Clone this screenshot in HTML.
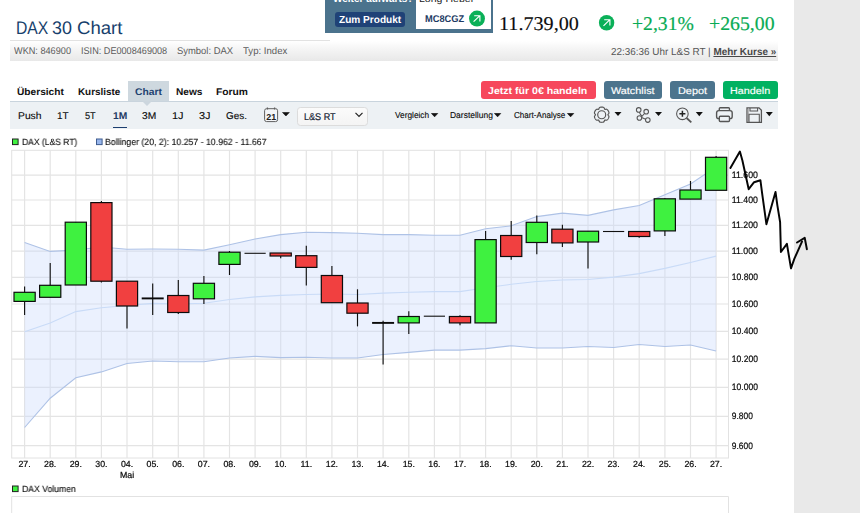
<!DOCTYPE html>
<html lang="de">
<head>
<meta charset="utf-8">
<title>DAX 30 Chart</title>
<style>
html,body{margin:0;padding:0;}
body{width:860px;height:513px;overflow:hidden;background:#fff;position:relative;font-family:"Liberation Sans",Arial,sans-serif;color:#222;}
.abs{position:absolute;white-space:nowrap;}
.t{position:absolute;white-space:nowrap;line-height:1;transform-origin:0 0;text-rendering:geometricPrecision;}
#side{left:794px;top:0;width:66px;height:513px;background:#e9e9e9;}
#title{left:15px;top:15px;font-size:20.5px;color:#173f6c;}
#adbox{left:325.2px;top:0;width:167.5px;height:32.5px;background:#4b738d;}
#adwhite{left:416px;top:0;width:74.6px;height:29.3px;background:#fff;}
#zum{left:335.1px;top:12.1px;width:69.7px;height:15.2px;background:#1f4277;border-radius:3px;}
#infobar{left:10px;top:41px;width:768px;height:20px;background:linear-gradient(#ffffff,#f6f6f6 35%,#e8e8e8);}
#infoline{left:10px;top:40px;width:320px;height:1px;background:#e2e2e2;}
#tabsel{left:128px;top:81px;width:41px;height:20px;background:#ced8df;}
#tabptr{left:142.3px;top:101px;width:0;height:0;border-left:5.3px solid transparent;border-right:5.3px solid transparent;border-top:5.6px solid #ccd6de;}
#toolbar{left:10px;top:101px;width:768px;height:28px;background:#edf1f4;border-top:1px solid #c9d4dd;box-sizing:border-box;}
.btn{position:absolute;top:81px;height:18px;border-radius:3px;}
.nav{font-size:11.5px;color:#111;font-weight:bold;}
.tb{font-size:11px;color:#111;}
.sm{font-size:8.5px;color:#111;}
.info{font-size:9.5px;color:#666;}
.price{font-family:"Liberation Serif",serif;}
</style>
</head>
<body>
<div class="abs" id="side"></div>


<div class="abs" id="adbox"></div>
<div class="abs" id="adwhite"></div>
<div class="abs" id="zum"></div>
<svg class="abs" style="left:466px;top:8px" width="22" height="22" viewBox="466 8 22 22"><circle cx="477" cy="18.55" r="7.95" fill="#0ab058"/><path d="M473.6 21.6L479.6 15.9M474.2 15.7H479.9V21.4" stroke="#fff" stroke-width="1.15" fill="none"/></svg>

<svg class="abs" style="left:596px;top:12px" width="22" height="22" viewBox="596 12 22 22"><circle cx="606.6" cy="22.8" r="7.7" fill="#0ab058"/><path d="M603.5 25.8L609.6 19.9M604.2 19.7H609.9V25.4" stroke="#fff" stroke-width="1.15" fill="none"/></svg>

<div class="abs" id="infobar"></div><div class="abs" id="infoline"></div>

<div class="abs" id="tabsel"></div>

<div class="btn" style="left:481px;width:115px;background:#f6475c;"></div>
<div class="btn" style="left:604px;width:58px;background:#4c748d;"></div>
<div class="btn" style="left:670px;width:45px;background:#4c748d;"></div>
<div class="btn" style="left:723px;width:55px;background:#01b161;"></div>

<div class="abs" id="toolbar"></div>
<div class="abs" id="tabptr"></div>
<div class="abs" style="left:113.2px;top:126.7px;width:13.6px;height:1.4px;background:#1c3e6f;"></div>

<!-- calendar icon -->
<svg class="abs" style="left:255px;top:100px" width="40" height="30" viewBox="255 100 40 30">
<rect x="264.6" y="108.7" width="13" height="12.9" rx="2" fill="#f4f6f8" stroke="#5f5f5f" stroke-width="1"/>
<path d="M267.4 107.4V109.6M274.6 107.4V109.6" stroke="#5f5f5f" stroke-width="1.3" fill="none"/>
<text x="271.2" y="119.9" font-family="Liberation Sans, Arial, sans-serif" font-size="8.9" font-weight="bold" text-anchor="middle" fill="#222">21</text>
<path d="M282.5 112.5H289.3L285.9 116Z" fill="#111" stroke="#111" stroke-width="0.6" stroke-linejoin="round"/>
</svg>

<div class="abs" style="left:297px;top:106.5px;width:71.3px;height:19px;background:linear-gradient(#fbfbfb,#f4f4f4);border:1px solid #dcdcdc;border-radius:3.5px;box-sizing:border-box;"></div>
<svg class="abs" style="left:354px;top:111px" width="10" height="8" viewBox="0 0 10 8"><path d="M1.5 1.8L5 5.3L8.5 1.8" stroke="#222" stroke-width="1.2" fill="none"/></svg>

<svg class="abs" style="left:431.4px;top:112.6px" width="8" height="5" viewBox="0 0 8 5"><path d="M0.5 0.5H6.7L3.6 3.8Z" fill="#111" stroke="#111" stroke-width="0.7" stroke-linejoin="round"/></svg>
<svg class="abs" style="left:494.4px;top:112.6px" width="8" height="5" viewBox="0 0 8 5"><path d="M0.5 0.5H6.7L3.6 3.8Z" fill="#111" stroke="#111" stroke-width="0.7" stroke-linejoin="round"/></svg>
<svg class="abs" style="left:567.1px;top:112.6px" width="8" height="5" viewBox="0 0 8 5"><path d="M0.5 0.5H6.7L3.6 3.8Z" fill="#111" stroke="#111" stroke-width="0.7" stroke-linejoin="round"/></svg>

<!--ICONS--><svg class="abs" style="left:0;top:0" width="860" height="140" viewBox="0 0 860 140" fill="none" stroke="#555" stroke-width="1.05">
<path d="M601.70 107.10L602.03 107.11L602.36 107.13L602.69 107.17L603.02 107.23L603.34 107.31L603.64 107.44L603.92 107.65L604.16 107.94L604.34 108.32L604.48 108.74L604.61 109.11L604.80 109.33L605.09 109.38L605.47 109.32L605.90 109.23L606.32 109.19L606.70 109.25L607.01 109.39L607.28 109.59L607.51 109.82L607.73 110.08L607.93 110.34L608.11 110.62L608.28 110.90L608.44 111.19L608.59 111.49L608.72 111.79L608.83 112.10L608.92 112.42L608.96 112.76L608.92 113.10L608.78 113.45L608.54 113.80L608.25 114.13L608.00 114.43L607.90 114.70L608.00 114.97L608.25 115.27L608.54 115.60L608.78 115.95L608.92 116.30L608.96 116.64L608.92 116.98L608.83 117.30L608.72 117.61L608.59 117.91L608.44 118.21L608.28 118.50L608.11 118.78L607.93 119.06L607.73 119.32L607.51 119.58L607.28 119.81L607.01 120.01L606.70 120.15L606.32 120.21L605.90 120.17L605.47 120.08L605.09 120.02L604.80 120.07L604.61 120.29L604.48 120.66L604.34 121.08L604.16 121.46L603.92 121.75L603.64 121.96L603.34 122.09L603.02 122.17L602.69 122.23L602.36 122.27L602.03 122.29L601.70 122.30L601.37 122.29L601.04 122.27L600.71 122.23L600.38 122.17L600.06 122.09L599.76 121.96L599.48 121.75L599.24 121.46L599.06 121.08L598.92 120.66L598.79 120.29L598.60 120.07L598.31 120.02L597.93 120.08L597.50 120.17L597.08 120.21L596.70 120.15L596.39 120.01L596.12 119.81L595.89 119.58L595.67 119.32L595.47 119.06L595.29 118.78L595.12 118.50L594.96 118.21L594.81 117.91L594.68 117.61L594.57 117.30L594.48 116.98L594.44 116.64L594.48 116.30L594.62 115.95L594.86 115.60L595.15 115.27L595.40 114.97L595.50 114.70L595.40 114.43L595.15 114.13L594.86 113.80L594.62 113.45L594.48 113.10L594.44 112.76L594.48 112.42L594.57 112.10L594.68 111.79L594.81 111.49L594.96 111.19L595.12 110.90L595.29 110.62L595.47 110.34L595.67 110.08L595.89 109.82L596.12 109.59L596.39 109.39L596.70 109.25L597.08 109.19L597.50 109.23L597.93 109.32L598.31 109.38L598.60 109.33L598.79 109.11L598.92 108.74L599.06 108.32L599.24 107.94L599.48 107.65L599.76 107.44L600.06 107.31L600.38 107.23L600.71 107.17L601.04 107.13L601.37 107.11L601.70 107.10Z" stroke-width="1.15"/>
<circle cx="601.7" cy="114.7" r="4.0" stroke-width="1.15"/>
<g fill="#111" stroke="none">
<path d="M614.5 112H621.5L618 116Z"/>
<path d="M655 112H662L658.5 116Z"/>
<path d="M695.8 111.9H702.8L699.3 116.3Z"/>
<path d="M765.8 111.9H772.8L769.3 116.3Z"/>
</g>
<circle cx="638.7" cy="109.9" r="2.3"/>
<circle cx="646.2" cy="111.7" r="2.3"/>
<circle cx="639.4" cy="118" r="2.3"/>
<circle cx="647.8" cy="120.1" r="2.3"/>
<path d="M639.4 112.2C640 114.5 641 115.5 642 116M641.5 116.8L644.5 113.5M641.7 117.6L645.6 119.3"/>
<circle cx="682.4" cy="113.8" r="5.8"/>
<path d="M686.6 118L691.3 122.3" stroke-width="1.8"/>
<path d="M679.4 113.8H685.4M682.4 110.8V116.8" stroke="#222" stroke-width="1.5"/>
<path d="M719.3 110.4V108.7Q719.3 107.7 720.3 107.7H728.5Q729.5 107.7 729.5 108.7V110.4" stroke-width="1.4"/>
<rect x="716.6" y="110.6" width="15.6" height="8" rx="2.2" stroke-width="1.4"/>
<rect x="719.3" y="116.2" width="10.2" height="5.3" rx="1" fill="#edf1f4" stroke-width="1.4"/>
<path d="M747 107.9H759L761.4 110.3V122.4H747Z" stroke-width="1.3"/><path d="M748.3 109V121.5" stroke="#aaa" stroke-width="1"/>
<path d="M750 108V111H757.6V108"/>
<path d="M749 122.4V114.3H759.3V122.4"/>
</svg><!--/ICONS-->

<h1 style="margin:0;font-size:inherit;font-weight:normal"><span class="t" id="title" style="left:15.72px;top:19.00px;font-size:18.2px;color:#173f6c;transform:scaleX(0.8645);">DAX</span> <span class="t" id="title2" style="left:52.30px;top:19.00px;font-size:18.2px;color:#173f6c;transform:scaleX(0.9854);">30</span> <span class="t" id="title3" style="left:76.66px;top:19.00px;font-size:18.2px;color:#173f6c;transform:scaleX(1.0216);">Chart</span></h1>
<div class="t" id="ad1" style="left:332.81px;top:-6.00px;font-size:10.8px;color:#fff;font-weight:bold;transform:scaleX(0.9263);">Weiter aufwärts?</div>
<div class="t" id="ad2" style="left:419.37px;top:-5.00px;font-size:10.3px;color:#222;transform:scaleX(1.0251);">Long Hebel</div>
<div class="t" id="zumt" style="left:338.87px;top:16.01px;font-size:10.3px;color:#fff;font-weight:bold;transform:scaleX(0.9798);">Zum Produkt</div>
<div class="t" id="mc" style="left:425.48px;top:15.00px;font-size:9.75px;color:#1c3a63;font-weight:bold;transform:scaleX(0.9521);">MC8CGZ</div>
<div class="t" id="price" style="left:499.11px;top:15.01px;font-size:19.5px;color:#0c0c0c;-webkit-text-stroke:0.15px #0c0c0c;font-family:'Liberation Serif','Times New Roman',serif;transform:scaleX(1.0332);">11.739,00</div>
<div class="t" id="pct" style="left:632.14px;top:15.01px;font-size:19.5px;color:#09ab54;-webkit-text-stroke:0.2px #09ab54;font-family:'Liberation Serif','Times New Roman',serif;transform:scaleX(1.0074);">+2,31%</div>
<div class="t" id="abs" style="left:709.14px;top:15.01px;font-size:19.5px;color:#09ab54;-webkit-text-stroke:0.2px #09ab54;font-family:'Liberation Serif','Times New Roman',serif;transform:scaleX(1.0140);">+265,00</div>
<div class="t" id="wkn" style="left:14.36px;top:47.01px;font-size:9.8px;color:#5c5c5c;transform:scaleX(0.9342);">WKN: 846900</div>
<div class="t" id="isin" style="left:81.40px;top:47.01px;font-size:9.8px;color:#5c5c5c;transform:scaleX(0.9305);">ISIN: DE0008469008</div>
<div class="t" id="sym" style="left:176.98px;top:47.01px;font-size:9.8px;color:#5c5c5c;transform:scaleX(0.9619);">Symbol: DAX</div>
<div class="t" id="typ" style="left:242.92px;top:47.01px;font-size:9.8px;color:#5c5c5c;transform:scaleX(0.9798);">Typ: Index</div>
<div class="t" id="time" style="left:610.74px;top:48.01px;font-size:10.1px;color:#555;transform:scaleX(0.9813);">22:36:36 Uhr L&amp;S RT | <b style="text-decoration:underline;color:#484848">Mehr Kurse »</b></div>
<div class="t" id="n1" style="left:17.10px;top:88.01px;font-size:9.75px;color:#111;font-weight:bold;transform:scaleX(1.0417);">Übersicht</div>
<div class="t" id="n2" style="left:78.40px;top:88.01px;font-size:9.75px;color:#111;font-weight:bold;transform:scaleX(1.0118);">Kursliste</div>
<div class="t" id="n3" style="left:134.51px;top:88.01px;font-size:9.75px;color:#1d4370;font-weight:bold;transform:scaleX(1.0533);">Chart</div>
<div class="t" id="n4" style="left:175.75px;top:88.01px;font-size:9.75px;color:#111;font-weight:bold;transform:scaleX(1.0391);">News</div>
<div class="t" id="n5" style="left:215.94px;top:88.01px;font-size:9.75px;color:#111;font-weight:bold;transform:scaleX(1.0516);">Forum</div>
<div class="t" id="b1" style="left:488.41px;top:87.01px;font-size:9.8px;color:#fff;font-weight:bold;transform:scaleX(1.0796);">Jetzt für 0€ handeln</div>
<div class="t" id="b2" style="left:610.76px;top:87.01px;font-size:9.8px;color:#fff;-webkit-text-stroke:0.15px #fff;transform:scaleX(1.1063);">Watchlist</div>
<div class="t" id="b3" style="left:677.77px;top:87.01px;font-size:9.8px;color:#fff;-webkit-text-stroke:0.15px #fff;transform:scaleX(1.1126);">Depot</div>
<div class="t" id="b4" style="left:730.37px;top:87.01px;font-size:9.8px;color:#fff;-webkit-text-stroke:0.15px #fff;transform:scaleX(1.1002);">Handeln</div>
<div class="t" id="t1" style="left:17.70px;top:112.00px;font-size:9.9px;color:#0a0a0a;-webkit-text-stroke:0.12px #0a0a0a;transform:scaleX(1.0451);">Push</div>
<div class="t" id="t2" style="left:56.99px;top:112.00px;font-size:9.9px;color:#0a0a0a;-webkit-text-stroke:0.12px #0a0a0a;transform:scaleX(1.0163);">1T</div>
<div class="t" id="t3" style="left:85.33px;top:112.00px;font-size:9.9px;color:#0a0a0a;-webkit-text-stroke:0.12px #0a0a0a;transform:scaleX(0.9315);">5T</div>
<div class="t" id="t4" style="left:112.65px;top:112.00px;font-size:9.9px;color:#1d3a63;font-weight:bold;transform:scaleX(1.0423);">1M</div>
<div class="t" id="t5" style="left:142.20px;top:112.00px;font-size:9.9px;color:#0a0a0a;-webkit-text-stroke:0.12px #0a0a0a;transform:scaleX(1.0381);">3M</div>
<div class="t" id="t6" style="left:172.12px;top:112.00px;font-size:9.9px;color:#0a0a0a;-webkit-text-stroke:0.12px #0a0a0a;transform:scaleX(1.1091);">1J</div>
<div class="t" id="t7" style="left:199.01px;top:112.00px;font-size:9.9px;color:#0a0a0a;-webkit-text-stroke:0.12px #0a0a0a;transform:scaleX(1.1079);">3J</div>
<div class="t" id="t8" style="left:226.09px;top:112.00px;font-size:9.9px;color:#0a0a0a;-webkit-text-stroke:0.12px #0a0a0a;transform:scaleX(1.0066);">Ges.</div>
<div class="t" id="sel" style="left:304.12px;top:113.01px;font-size:9.8px;color:#151d33;-webkit-text-stroke:0.2px #151d33;transform:scaleX(0.9244);">L&amp;S RT</div>
<div class="t" id="v1" style="left:395.07px;top:111.00px;font-size:8.7px;color:#0a0a0a;-webkit-text-stroke:0.12px #0a0a0a;transform:scaleX(0.9538);">Vergleich</div>
<div class="t" id="v2" style="left:450.25px;top:111.00px;font-size:8.7px;color:#0a0a0a;-webkit-text-stroke:0.12px #0a0a0a;transform:scaleX(0.9753);">Darstellung</div>
<div class="t" id="v3" style="left:513.70px;top:111.00px;font-size:8.7px;color:#0a0a0a;-webkit-text-stroke:0.12px #0a0a0a;transform:scaleX(0.9319);">Chart-Analyse</div>
<div class="t" id="l1" style="left:21.68px;top:138.01px;font-size:9.15px;color:#0c0c0c;will-change:transform;-webkit-text-stroke:0.12px #0c0c0c;transform:scaleX(0.9357);">DAX (L&amp;S RT)</div>
<div class="t" id="l2" style="left:105.27px;top:138.01px;font-size:9.15px;color:#0c0c0c;will-change:transform;-webkit-text-stroke:0.12px #0c0c0c;transform:scaleX(0.9571);">Bollinger (20, 2): 10.257 - 10.962 - 11.667</div>
<div class="t" id="l3" style="left:21.92px;top:485.01px;font-size:9.15px;color:#0c0c0c;will-change:transform;-webkit-text-stroke:0.12px #0c0c0c;transform:scaleX(0.9475);">DAX Volumen</div>
<svg id="chart" width="860" height="513" viewBox="0 0 860 513" style="position:absolute;left:0;top:0">
<rect x="11.7" y="150.3" width="716.8" height="307.7" fill="#fff" stroke="#e2e2e2" stroke-width="1"/>
<path d="M24.6 150.3V458.0M50.2 150.3V458.0M75.8 150.3V458.0M101.4 150.3V458.0M127.0 150.3V458.0M152.7 150.3V458.0M178.3 150.3V458.0M203.9 150.3V458.0M229.5 150.3V458.0M255.1 150.3V458.0M280.7 150.3V458.0M306.3 150.3V458.0M331.9 150.3V458.0M357.5 150.3V458.0M383.1 150.3V458.0M408.8 150.3V458.0M434.4 150.3V458.0M460.0 150.3V458.0M485.6 150.3V458.0M511.2 150.3V458.0M536.8 150.3V458.0M562.4 150.3V458.0M588.0 150.3V458.0M613.6 150.3V458.0M639.2 150.3V458.0M664.9 150.3V458.0M690.5 150.3V458.0M716.1 150.3V458.0M11.7 175.1H728.5M11.7 200.0H728.5M11.7 225.3H728.5M11.7 251.1H728.5M11.7 277.3H728.5M11.7 304.0H728.5M11.7 331.3H728.5M11.7 359.1H728.5M11.7 387.4H728.5M11.7 416.3H728.5M11.7 445.7H728.5" stroke="#e4e4e4" stroke-width="1.2" fill="none"/>
<polygon points="24.6,242.6 50.2,251.4 75.8,250.0 101.4,247.0 127.0,249.3 152.7,249.0 178.3,249.2 203.9,250.1 229.5,244.8 255.1,239.0 280.7,234.6 306.3,232.3 331.9,232.6 357.5,233.2 383.1,234.6 408.8,234.6 434.4,235.2 460.0,235.2 485.6,228.8 511.2,225.8 536.8,216.6 562.4,213.1 588.0,215.4 613.6,209.9 639.2,205.5 664.9,194.7 690.5,183.9 716.1,166.9 716.1,351.0 690.5,345.0 664.9,346.5 639.2,344.5 613.6,347.5 588.0,346.5 562.4,348.0 536.8,348.0 511.2,345.7 485.6,348.6 460.0,350.1 434.4,350.1 408.8,352.4 383.1,354.5 357.5,358.0 331.9,358.0 306.3,357.2 280.7,357.6 255.1,356.4 229.5,358.0 203.9,361.8 178.3,361.8 152.7,361.0 127.0,363.5 101.4,371.9 75.8,377.7 50.2,398.2 24.6,427.5" fill="#c8d9fb" fill-opacity="0.36"/>
<polyline points="24.6,242.6 50.2,251.4 75.8,250.0 101.4,247.0 127.0,249.3 152.7,249.0 178.3,249.2 203.9,250.1 229.5,244.8 255.1,239.0 280.7,234.6 306.3,232.3 331.9,232.6 357.5,233.2 383.1,234.6 408.8,234.6 434.4,235.2 460.0,235.2 485.6,228.8 511.2,225.8 536.8,216.6 562.4,213.1 588.0,215.4 613.6,209.9 639.2,205.5 664.9,194.7 690.5,183.9 716.1,166.9" fill="none" stroke="#aec2e6" stroke-width="1.1"/>
<polyline points="24.6,427.5 50.2,398.2 75.8,377.7 101.4,371.9 127.0,363.5 152.7,361.0 178.3,361.8 203.9,361.8 229.5,358.0 255.1,356.4 280.7,357.6 306.3,357.2 331.9,358.0 357.5,358.0 383.1,354.5 408.8,352.4 434.4,350.1 460.0,350.1 485.6,348.6 511.2,345.7 536.8,348.0 562.4,348.0 588.0,346.5 613.6,347.5 639.2,344.5 664.9,346.5 690.5,345.0 716.1,351.0" fill="none" stroke="#aec2e6" stroke-width="1.1"/>
<polyline points="24.6,331.8 50.2,323.0 75.8,311.6 101.4,307.8 127.0,305.5 152.7,303.4 178.3,304.0 203.9,303.3 229.5,299.5 255.1,296.9 280.7,295.4 306.3,294.5 331.9,294.0 357.5,294.5 383.1,293.1 408.8,292.2 434.4,291.6 460.0,291.6 485.6,287.8 511.2,284.3 536.8,281.5 562.4,280.0 588.0,279.5 613.6,277.1 639.2,273.6 664.9,268.4 690.5,262.5 716.1,256.1" fill="none" stroke="#c9dbf7" stroke-width="1.1"/>
<line x1="24.6" y1="286.5" x2="24.6" y2="315.1" stroke="#111" stroke-width="1.15"/>
<rect x="14.0" y="292.3" width="21.2" height="9.1" fill="#3ff140" stroke="#0c0c0c" stroke-width="1.2"/>
<line x1="50.2" y1="263.1" x2="50.2" y2="297.3" stroke="#111" stroke-width="1.15"/>
<rect x="39.6" y="285.3" width="21.2" height="12.0" fill="#3ff140" stroke="#0c0c0c" stroke-width="1.2"/>
<line x1="75.8" y1="222.2" x2="75.8" y2="285.0" stroke="#111" stroke-width="1.15"/>
<rect x="65.2" y="222.2" width="21.2" height="62.8" fill="#3ff140" stroke="#0c0c0c" stroke-width="1.2"/>
<line x1="101.4" y1="201.1" x2="101.4" y2="282.4" stroke="#111" stroke-width="1.15"/>
<rect x="90.8" y="202.6" width="21.2" height="78.6" fill="#f14040" stroke="#0c0c0c" stroke-width="1.2"/>
<line x1="127.0" y1="281.2" x2="127.0" y2="328.6" stroke="#111" stroke-width="1.15"/>
<rect x="116.4" y="281.2" width="21.2" height="24.8" fill="#f14040" stroke="#0c0c0c" stroke-width="1.2"/>
<line x1="152.7" y1="283.5" x2="152.7" y2="315.1" stroke="#111" stroke-width="1.15"/>
<line x1="141.7" y1="298.4" x2="163.7" y2="298.4" stroke="#0a0a0a" stroke-width="1.9"/>
<line x1="178.3" y1="280.0" x2="178.3" y2="314.0" stroke="#111" stroke-width="1.15"/>
<rect x="167.7" y="295.5" width="21.2" height="17.0" fill="#f14040" stroke="#0c0c0c" stroke-width="1.2"/>
<line x1="203.9" y1="276.1" x2="203.9" y2="303.9" stroke="#111" stroke-width="1.15"/>
<rect x="193.3" y="283.3" width="21.2" height="15.5" fill="#3ff140" stroke="#0c0c0c" stroke-width="1.2"/>
<line x1="229.5" y1="251.0" x2="229.5" y2="275.0" stroke="#111" stroke-width="1.15"/>
<rect x="218.9" y="252.2" width="21.2" height="12.2" fill="#3ff140" stroke="#0c0c0c" stroke-width="1.2"/>
<line x1="244.5" y1="253.3" x2="265.7" y2="253.3" stroke="#111" stroke-width="1.1"/>
<line x1="280.7" y1="253.0" x2="280.7" y2="258.3" stroke="#111" stroke-width="1.15"/>
<rect x="270.1" y="253.0" width="21.2" height="3.0" fill="#f14040" stroke="#0c0c0c" stroke-width="1.2"/>
<line x1="306.3" y1="245.7" x2="306.3" y2="285.5" stroke="#111" stroke-width="1.15"/>
<rect x="295.7" y="255.7" width="21.2" height="11.7" fill="#f14040" stroke="#0c0c0c" stroke-width="1.2"/>
<line x1="331.9" y1="265.9" x2="331.9" y2="302.7" stroke="#111" stroke-width="1.15"/>
<rect x="321.3" y="275.5" width="21.2" height="27.2" fill="#f14040" stroke="#0c0c0c" stroke-width="1.2"/>
<line x1="357.5" y1="289.3" x2="357.5" y2="326.4" stroke="#111" stroke-width="1.15"/>
<rect x="346.9" y="303.0" width="21.2" height="10.2" fill="#f14040" stroke="#0c0c0c" stroke-width="1.2"/>
<line x1="383.1" y1="320.8" x2="383.1" y2="364.4" stroke="#111" stroke-width="1.15"/>
<line x1="372.1" y1="322.9" x2="394.1" y2="322.9" stroke="#0a0a0a" stroke-width="1.9"/>
<line x1="408.8" y1="311.2" x2="408.8" y2="334.0" stroke="#111" stroke-width="1.15"/>
<rect x="398.1" y="316.5" width="21.2" height="6.4" fill="#3ff140" stroke="#0c0c0c" stroke-width="1.2"/>
<line x1="423.8" y1="316.2" x2="445.0" y2="316.2" stroke="#111" stroke-width="1.1"/>
<line x1="460.0" y1="315.3" x2="460.0" y2="325.2" stroke="#111" stroke-width="1.15"/>
<rect x="449.4" y="316.5" width="21.2" height="6.4" fill="#f14040" stroke="#0c0c0c" stroke-width="1.2"/>
<line x1="485.6" y1="231.1" x2="485.6" y2="322.9" stroke="#111" stroke-width="1.15"/>
<rect x="475.0" y="239.6" width="21.2" height="83.3" fill="#3ff140" stroke="#0c0c0c" stroke-width="1.2"/>
<line x1="511.2" y1="220.9" x2="511.2" y2="259.8" stroke="#111" stroke-width="1.15"/>
<rect x="500.6" y="235.5" width="21.2" height="21.0" fill="#f14040" stroke="#0c0c0c" stroke-width="1.2"/>
<line x1="536.8" y1="215.5" x2="536.8" y2="254.2" stroke="#111" stroke-width="1.15"/>
<rect x="526.2" y="222.3" width="21.2" height="20.2" fill="#3ff140" stroke="#0c0c0c" stroke-width="1.2"/>
<line x1="562.4" y1="224.8" x2="562.4" y2="247.0" stroke="#111" stroke-width="1.15"/>
<rect x="551.8" y="229.2" width="21.2" height="13.7" fill="#f14040" stroke="#0c0c0c" stroke-width="1.2"/>
<line x1="588.0" y1="231.2" x2="588.0" y2="268.6" stroke="#111" stroke-width="1.15"/>
<rect x="577.4" y="231.2" width="21.2" height="10.8" fill="#3ff140" stroke="#0c0c0c" stroke-width="1.2"/>
<line x1="603.0" y1="231.5" x2="624.2" y2="231.5" stroke="#111" stroke-width="1.1"/>
<line x1="639.2" y1="231.5" x2="639.2" y2="237.7" stroke="#111" stroke-width="1.15"/>
<rect x="628.6" y="231.5" width="21.2" height="5.0" fill="#f14040" stroke="#0c0c0c" stroke-width="1.2"/>
<line x1="664.9" y1="197.9" x2="664.9" y2="235.9" stroke="#111" stroke-width="1.15"/>
<rect x="654.2" y="198.8" width="21.2" height="32.1" fill="#3ff140" stroke="#0c0c0c" stroke-width="1.2"/>
<line x1="690.5" y1="181.0" x2="690.5" y2="199.1" stroke="#111" stroke-width="1.15"/>
<rect x="679.9" y="190.0" width="21.2" height="9.1" fill="#3ff140" stroke="#0c0c0c" stroke-width="1.2"/>
<line x1="716.1" y1="156.1" x2="716.1" y2="190.3" stroke="#111" stroke-width="1.15"/>
<rect x="705.5" y="157.3" width="21.2" height="33.0" fill="#3ff140" stroke="#0c0c0c" stroke-width="1.2"/>
<g font-family="Liberation Sans, Arial, sans-serif" font-size="8.8" fill="#0c0c0c" stroke="#0c0c0c" stroke-width="0.22" text-rendering="geometricPrecision">
<text x="731.8" y="178.1" font-size="9.3" textLength="26.1" lengthAdjust="spacingAndGlyphs">11.600</text>
<text x="731.8" y="203.0" font-size="9.3" textLength="26.1" lengthAdjust="spacingAndGlyphs">11.400</text>
<text x="731.8" y="228.3" font-size="9.3" textLength="26.1" lengthAdjust="spacingAndGlyphs">11.200</text>
<text x="731.8" y="254.1" font-size="9.3" textLength="26.1" lengthAdjust="spacingAndGlyphs">11.000</text>
<text x="731.8" y="280.3" font-size="9.3" textLength="26.1" lengthAdjust="spacingAndGlyphs">10.800</text>
<text x="731.8" y="307.0" font-size="9.3" textLength="26.1" lengthAdjust="spacingAndGlyphs">10.600</text>
<text x="731.8" y="334.3" font-size="9.3" textLength="26.1" lengthAdjust="spacingAndGlyphs">10.400</text>
<text x="731.8" y="362.1" font-size="9.3" textLength="26.1" lengthAdjust="spacingAndGlyphs">10.200</text>
<text x="731.8" y="390.4" font-size="9.3" textLength="26.1" lengthAdjust="spacingAndGlyphs">10.000</text>
<text x="731.8" y="419.3" font-size="9.3" textLength="21.0" lengthAdjust="spacingAndGlyphs">9.800</text>
<text x="731.8" y="448.7" font-size="9.3" textLength="21.0" lengthAdjust="spacingAndGlyphs">9.600</text>
<text x="24.6" y="467.0" text-anchor="middle">27.</text>
<text x="50.2" y="467.0" text-anchor="middle">28.</text>
<text x="75.8" y="467.0" text-anchor="middle">29.</text>
<text x="101.4" y="467.0" text-anchor="middle">30.</text>
<text x="127.0" y="467.0" text-anchor="middle">04.</text>
<text x="152.7" y="467.0" text-anchor="middle">05.</text>
<text x="178.3" y="467.0" text-anchor="middle">06.</text>
<text x="203.9" y="467.0" text-anchor="middle">07.</text>
<text x="229.5" y="467.0" text-anchor="middle">08.</text>
<text x="255.1" y="467.0" text-anchor="middle">09.</text>
<text x="280.7" y="467.0" text-anchor="middle">10.</text>
<text x="306.3" y="467.0" text-anchor="middle">11.</text>
<text x="331.9" y="467.0" text-anchor="middle">12.</text>
<text x="357.5" y="467.0" text-anchor="middle">13.</text>
<text x="383.1" y="467.0" text-anchor="middle">14.</text>
<text x="408.8" y="467.0" text-anchor="middle">15.</text>
<text x="434.4" y="467.0" text-anchor="middle">16.</text>
<text x="460.0" y="467.0" text-anchor="middle">17.</text>
<text x="485.6" y="467.0" text-anchor="middle">18.</text>
<text x="511.2" y="467.0" text-anchor="middle">19.</text>
<text x="536.8" y="467.0" text-anchor="middle">20.</text>
<text x="562.4" y="467.0" text-anchor="middle">21.</text>
<text x="588.0" y="467.0" text-anchor="middle">22.</text>
<text x="613.6" y="467.0" text-anchor="middle">23.</text>
<text x="639.2" y="467.0" text-anchor="middle">24.</text>
<text x="664.9" y="467.0" text-anchor="middle">25.</text>
<text x="690.5" y="467.0" text-anchor="middle">26.</text>
<text x="716.1" y="467.0" text-anchor="middle">27.</text>
<text x="127.0" y="477.5" text-anchor="middle">Mai</text>
</g>
<rect x="12.5" y="139" width="5.6" height="5.6" fill="#3ff140" stroke="#222" stroke-width="1"/>
<rect x="96.5" y="139" width="5.6" height="5.6" fill="#98b6ec" stroke="#3f5c90" stroke-width="1"/>
<rect x="12.5" y="486" width="5.6" height="5.6" fill="#3ff140" stroke="#222" stroke-width="1"/>
<path d="M11.7 513V496.5H728.5V513" fill="#fff" stroke="#e2e2e2" stroke-width="1"/>
<polyline points="730.4,167.9 739.9,151.5 742.4,160.5 748.7,189.2 754.1,182.2 760.4,180.2 762.3,194.6 766.4,224.2 775.5,191.9 777.4,205.6 780.1,222 780.9,252 786.9,243.8 791,268.4 794.3,258.9 802,241.6" fill="none" stroke="#050505" stroke-width="1.95" stroke-linejoin="round" stroke-linecap="round"/>
<polyline points="797,242.5 804.7,237.8 806.9,249.3" fill="none" stroke="#050505" stroke-width="1.95" stroke-linejoin="round" stroke-linecap="round"/>
</svg>
</body>
</html>
